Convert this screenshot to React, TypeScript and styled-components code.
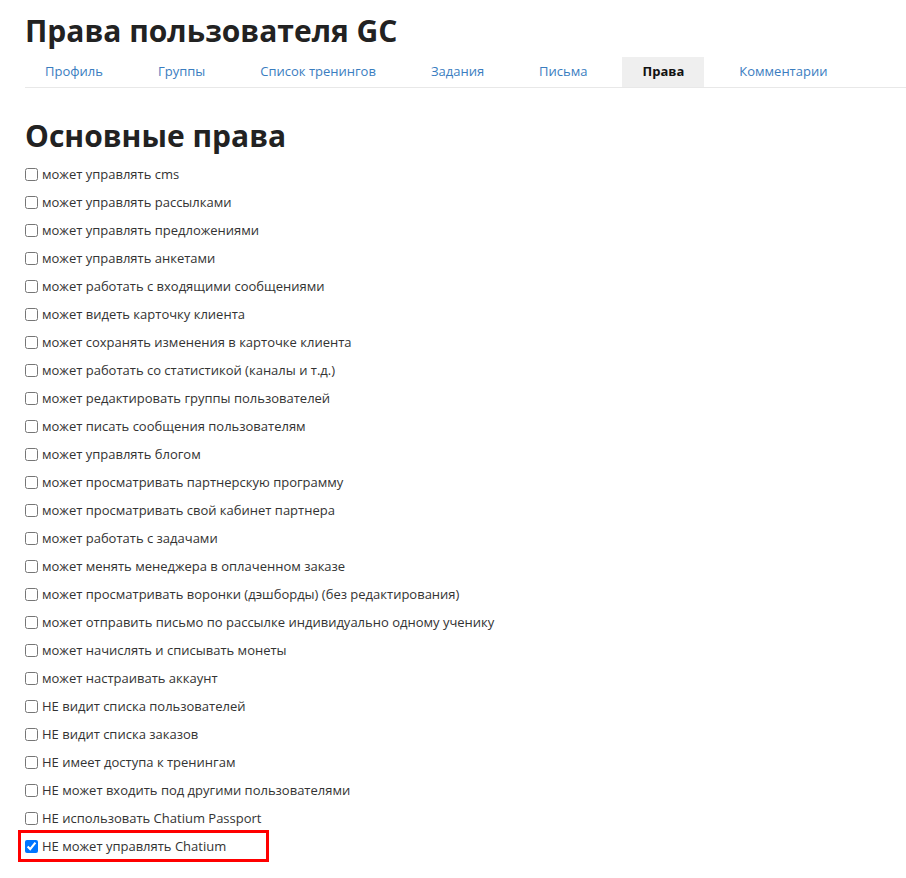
import React from 'react';
import styled, { createGlobalStyle } from 'styled-components';

const GlobalStyles = createGlobalStyle`
  body {
    margin: 0;
    background: #fff;
    font-family: 'Open Sans', 'Liberation Sans', sans-serif;
    color: #333;
  }
`;

const Page = styled.main`
  padding: 13px 0 23px 25px;
`;

const Title = styled.h1`
  margin: 0;
  font-size: 30px;
  font-weight: 700;
  line-height: 36px;
  color: #222;
`;

const Tabs = styled.nav`
  display: flex;
  gap: 15px;
  margin-top: 8px;
  border-bottom: 1px solid #e8e8e8;
`;

const Tab = styled.a<{ $active?: boolean }>`
  display: block;
  padding: 0 20px;
  height: 30px;
  line-height: 29px;
  font-size: 13px;
  text-decoration: none;
  color: ${p => (p.$active ? '#111' : '#3a7dbf')};
  font-weight: ${p => (p.$active ? 700 : 400)};
  background: ${p => (p.$active ? '#efefef' : 'transparent')};
`;

const Section = styled.h2`
  margin: 30px 0 11px;
  font-size: 30px;
  font-weight: 700;
  line-height: 36px;
  color: #222;
`;

const List = styled.ul`
  list-style: none;
  margin: 0;
  padding: 0;
  display: flex;
  flex-direction: column;
  gap: 10px;
`;

const Item = styled.li`
  display: flex;
  align-items: center;
  gap: 4px;
  height: 18px;
  font-size: 13px;
`;

const MarkedItem = styled(Item)`
  box-sizing: border-box;
  width: 251px;
  height: 32px;
  border: 3px solid #f00;
  padding-left: 4px;
  margin: -7px 0 -7px -7px;
`;

const Box = styled.input`
  margin: 0;
  width: 13px;
  height: 13px;
`;

const tabs = ['Профиль', 'Группы', 'Список тренингов', 'Задания', 'Письма', 'Права', 'Комментарии'];

const rights = [
  'может управлять cms',
  'может управлять рассылками',
  'может управлять предложениями',
  'может управлять анкетами',
  'может работать с входящими сообщениями',
  'может видеть карточку клиента',
  'может сохранять изменения в карточке клиента',
  'может работать со статистикой (каналы и т.д.)',
  'может редактировать группы пользователей',
  'может писать сообщения пользователям',
  'может управлять блогом',
  'может просматривать партнерскую программу',
  'может просматривать свой кабинет партнера',
  'может работать с задачами',
  'может менять менеджера в оплаченном заказе',
  'может просматривать воронки (дэшборды) (без редактирования)',
  'может отправить письмо по рассылке индивидуально одному ученику',
  'может начислять и списывать монеты',
  'может настраивать аккаунт',
  'НЕ видит списка пользователей',
  'НЕ видит списка заказов',
  'НЕ имеет доступа к тренингам',
  'НЕ может входить под другими пользователями',
  'НЕ использовать Chatium Passport',
];

const App = () => (
  <>
    <GlobalStyles />
    <Page>
      <Title>Права пользователя GC</Title>
      <Tabs>
        {tabs.map(t => (
          <Tab key={t} href="#" $active={t === 'Права'}>
            {t}
          </Tab>
        ))}
      </Tabs>
      <Section>Основные права</Section>
      <List>
        {rights.map(r => (
          <Item key={r}>
            <Box type="checkbox" />
            <span>{r}</span>
          </Item>
        ))}
        <MarkedItem>
          <Box type="checkbox" defaultChecked />
          <span>НЕ может управлять Chatium</span>
        </MarkedItem>
      </List>
    </Page>
  </>
);

export default App;
